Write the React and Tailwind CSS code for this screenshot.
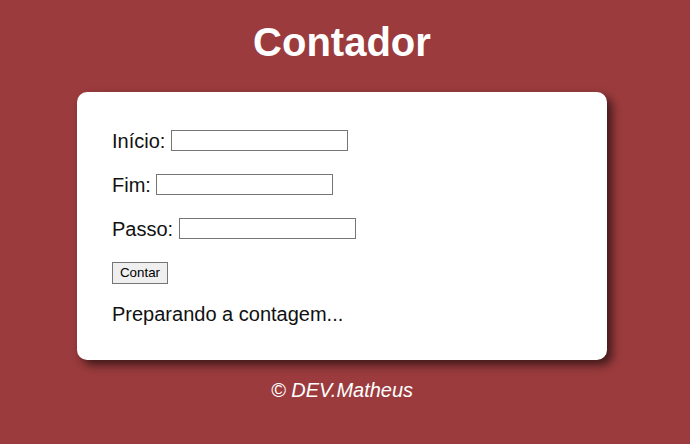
export default function App() {
  return (
    <div className="min-h-[444px] w-full bg-[#9b3b3d] font-['Liberation_Sans',Arial,sans-serif]">
      <div className="w-[684px] flex flex-col items-center">
        <h1 className="text-[40px] font-bold text-white leading-[46px] mt-[19px]">Contador</h1>
        <div className="w-[530px] mt-[27px] bg-white rounded-[10px] shadow-[5px_5px_10px_rgba(0,0,0,0.6)] pl-[35px] pt-[37px] pb-[35px] text-[20px] text-[#111]">
          <div className="flex flex-col gap-[21px]">
            <div className="h-[23px] flex items-center">
              <span>Início:&nbsp;</span>
              <input type="text" className="w-[177px] h-[21px] border border-[#767676] bg-white outline-none" />
            </div>
            <div className="h-[23px] flex items-center">
              <span>Fim:&nbsp;</span>
              <input type="text" className="w-[177px] h-[21px] border border-[#767676] bg-white outline-none" />
            </div>
            <div className="h-[23px] flex items-center">
              <span>Passo:&nbsp;</span>
              <input type="text" className="w-[177px] h-[21px] border border-[#767676] bg-white outline-none" />
            </div>
            <div className="h-[23px] flex items-center">
              <button type="button" className="w-[56px] h-[22px] border border-[#767676] bg-[#efefef] text-[13.33px] leading-none text-black">
                Contar
              </button>
            </div>
          </div>
          <div className="h-[23px] mt-[18px] flex items-center">Preparando a contagem...</div>
        </div>
        <p className="mt-[19px] text-[20px] italic text-white leading-[23px]">© DEV.Matheus</p>
      </div>
    </div>
  );
}
